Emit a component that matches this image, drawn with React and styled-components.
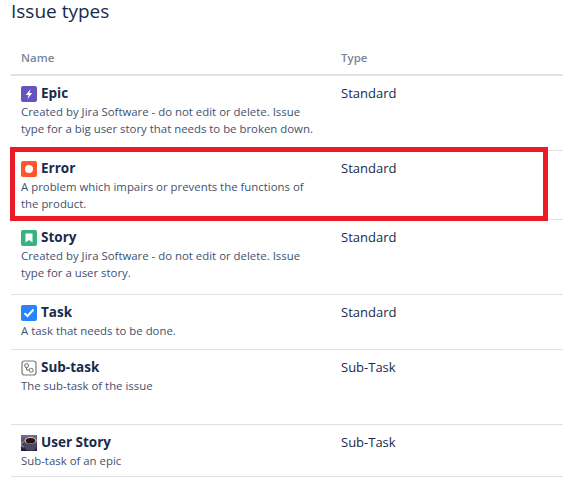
import React from "react";
import styled, { createGlobalStyle } from "styled-components";

const Global = createGlobalStyle`
  html, body { margin: 0; padding: 0; background: #fff; overflow: hidden; }
  body { font-family: "Open Sans", "Noto Sans", sans-serif; color: #172b4d; }
`;
const Page = styled.div`
  position: relative;
  width: 563px;
  height: 502px;
  overflow: hidden;
  padding: 0 0 0 11px;
  box-sizing: border-box;
`;
const Title = styled.h1`
  margin: 0;
  height: 44px;
  font-size: 19px;
  line-height: 23px;
  font-weight: 500;
  color: #172b4d;
`;
const HeaderRow = styled.div`
  display: grid;
  grid-template-columns: 320px 1fr;
  height: 30px;
  border-bottom: 2px solid #dfe1e6;
  box-sizing: content-box;
  padding-left: 10px;
  font-size: 11.5px;
  font-weight: 600;
  line-height: 28px;
  color: #7a869a;
`;
const Row = styled.div`
  display: grid;
  grid-template-columns: 320px 1fr;
  height: ${(p) => p.$h}px;
  box-sizing: border-box;
  padding: 7px 0 0 10px;
  border-bottom: 1px solid #dfe1e6;
`;
const NameLine = styled.div`
  display: flex;
  align-items: center;
  gap: 4px;
  height: 20px;
  font-size: 13.5px;
  font-weight: 700;
  color: #172b4d;
`;
const IconSlot = styled.span`
  display: flex;
  flex: none;
  margin-top: 2px;
`;
const Desc = styled.div`
  width: 296px;
  font-size: 11.4px;
  line-height: 17px;
  color: #42526e;
`;
const TypeCell = styled.div`
  font-size: 13px;
  line-height: 20px;
  color: #172b4d;
`;
const Highlight = styled.div`
  position: absolute;
  left: 10px;
  top: 147px;
  width: 538px;
  height: 74px;
  border: 5px solid #ed1c24;
  box-sizing: border-box;
  pointer-events: none;
`;
const IconSvg = styled.svg`
  width: 16px;
  height: 16px;
  flex: none;
`;

const Epic = () => (
  <IconSvg viewBox="0 0 16 16">
    <rect width="16" height="16" rx="2" fill="#6554c0" />
    <path d="M9.600 3 4.800 9h2.800L6.400 13.200 11.200 7H8.400z" fill="#fff" />
  </IconSvg>
);
const ErrorIcon = () => (
  <IconSvg viewBox="0 0 16 16">
    <rect width="16" height="16" rx="2" fill="#ff5630" />
    <circle cx="8" cy="8" r="4" fill="#fff" />
  </IconSvg>
);
const Story = () => (
  <IconSvg viewBox="0 0 16 16">
    <rect width="16" height="16" rx="2" fill="#36b37e" />
    <path d="M4.500 3.500h7v9L8 10l-3.500 2.500z" fill="#fff" />
  </IconSvg>
);
const Task = () => (
  <IconSvg viewBox="0 0 16 16">
    <rect width="16" height="16" rx="2" fill="#2684ff" />
    <path d="M3.500 8.200 6.500 11l6-6.500" fill="none" stroke="#fff" strokeWidth="2" />
  </IconSvg>
);
const SubTask = () => (
  <IconSvg viewBox="0 0 16 16">
    <rect x="1" y="1" width="14" height="14" rx="2.500" fill="#fff" stroke="#7a7a7a" strokeWidth="1.200" />
    <rect x="3.800" y="3.800" width="3.600" height="3.600" rx="1.200" fill="none" stroke="#6b6b6b" strokeWidth="1" />
    <rect x="8.400" y="8.400" width="3.600" height="3.600" rx="1.200" fill="none" stroke="#6b6b6b" strokeWidth="1" />
    <path d="M5.600 7.400v2.600h2.800" fill="none" stroke="#6b6b6b" strokeWidth="1" />
  </IconSvg>
);
const Cup = () => (
  <IconSvg viewBox="0 0 16 16">
    <defs>
      <linearGradient id="cupBg" x1="0" y1="0" x2="0" y2="1">
        <stop offset="0" stopColor="#76728f" />
        <stop offset="1" stopColor="#1a1830" />
      </linearGradient>
    </defs>
    <rect width="16" height="16" fill="url(#cupBg)" />
    <path d="M3 5.500h12.500V12l-2 3.500H6L3 12z" fill="#4a4664" />
    <ellipse cx="9.500" cy="5.500" rx="6" ry="3.600" fill="#c9c7d6" />
    <ellipse cx="9.500" cy="5.800" rx="4.800" ry="2.800" fill="#2a1408" />
    <path d="M3 7H.8v4L3 12" fill="none" stroke="#8d8aa3" strokeWidth="1.200" />
  </IconSvg>
);

const rows = [
  { icon: <Epic />, name: "Epic", desc: "Created by Jira Software - do not edit or delete. Issue type for a big user story that needs to be broken down.", type: "Standard", h: 75 },
  { icon: <ErrorIcon />, name: "Error", desc: "A problem which impairs or prevents the functions of the product.", type: "Standard", h: 69 },
  { icon: <Story />, name: "Story", desc: "Created by Jira Software - do not edit or delete. Issue type for a user story.", type: "Standard", h: 75 },
  { icon: <Task />, name: "Task", desc: "A task that needs to be done.", type: "Standard", h: 55 },
  { icon: <SubTask />, name: "Sub-task", desc: "The sub-task of the issue", type: "Sub-Task", h: 75 },
  { icon: <Cup />, name: "User Story", desc: "Sub-task of an epic", type: "Sub-Task", h: 52 },
];

export default function App() {
  return (
    <Page>
      <Global />
      <Title>Issue types</Title>
      <HeaderRow>
        <span>Name</span>
        <span>Type</span>
      </HeaderRow>
      {rows.map((r) => (
        <Row key={r.name} $h={r.h}>
          <div>
            <NameLine>
              <IconSlot>{r.icon}</IconSlot>
              {r.name}
            </NameLine>
            <Desc>{r.desc}</Desc>
          </div>
          <TypeCell>{r.type}</TypeCell>
        </Row>
      ))}
      <Highlight />
    </Page>
  );
}
